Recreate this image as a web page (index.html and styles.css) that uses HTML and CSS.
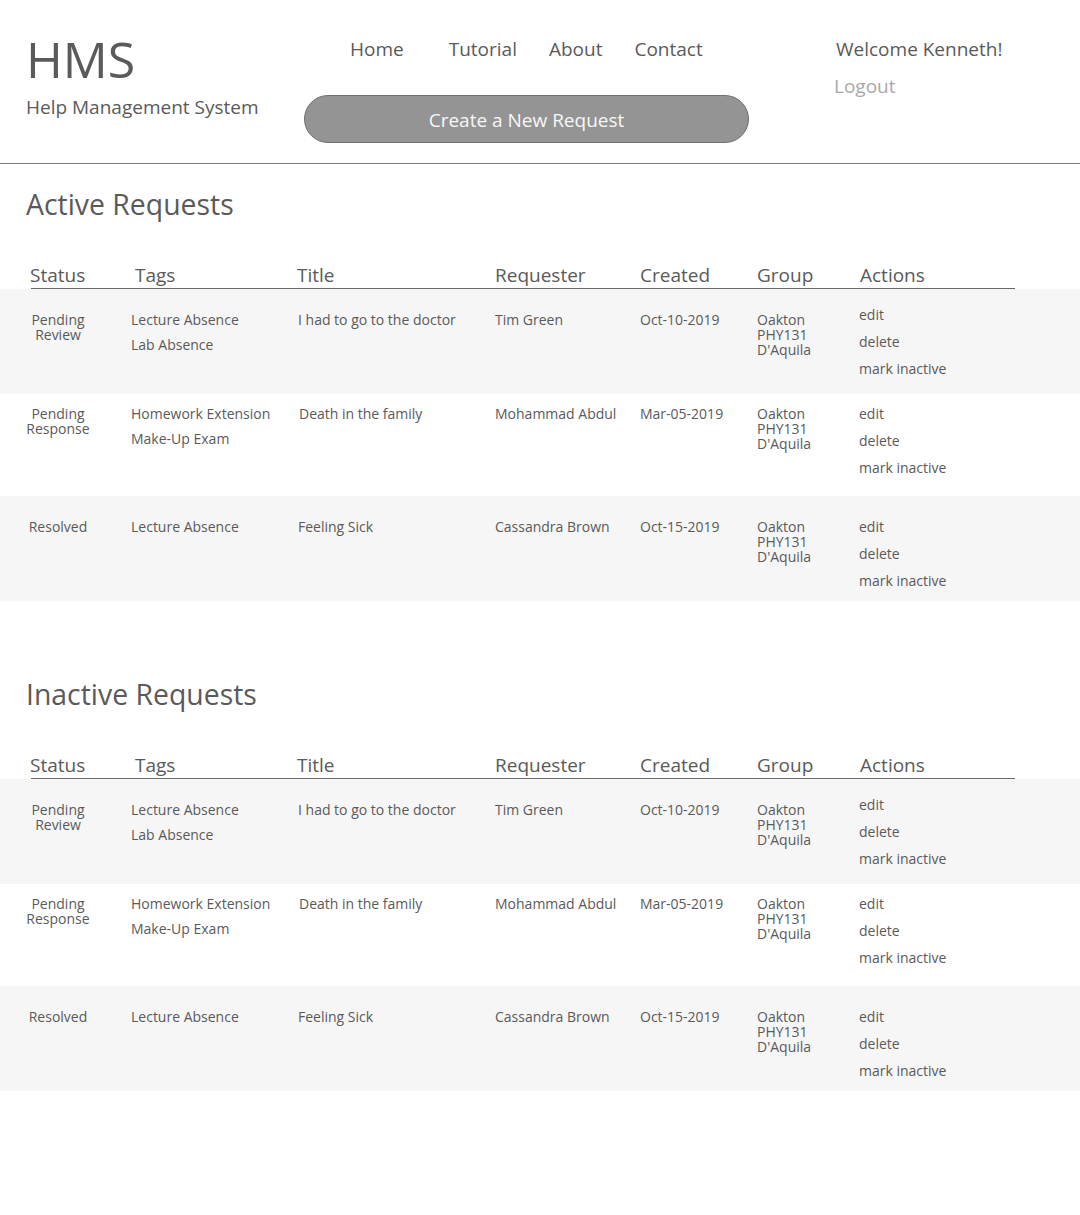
FILE: index.html
```html
<!DOCTYPE html>
<html lang="en">
<head>
<meta charset="utf-8">
<title>HMS - Help Management System</title>
<link rel="stylesheet" href="styles.css">
</head>
<body>
<header class="topbar">
  <div class="brand">
    <div class="logo">HMS</div>
    <div class="tagline">Help Management System</div>
  </div>
  <div class="center">
    <nav class="links">
      <a class="link link-home" href="#">Home</a>
      <a class="link" href="#">Tutorial</a>
      <a class="link" href="#">About</a>
      <a class="link" href="#">Contact</a>
    </nav>
    <button class="cta" type="button">Create a New Request</button>
  </div>
  <div class="user">
    <div class="welcome">Welcome Kenneth!</div>
    <a class="logout" href="#">Logout</a>
  </div>
</header>

<main>
  <section class="requests">
    <h2 class="section-title">Active Requests</h2>
    <div class="thead">
      <span>Status</span><span>Tags</span><span>Title</span><span>Requester</span><span>Created</span><span>Group</span><span>Actions</span>
    </div>
    <div class="row shaded first">
      <div class="status">Pending<br>Review</div>
      <div class="tags"><span>Lecture Absence</span><span>Lab Absence</span></div>
      <div class="cell">I had to go to the doctor</div>
      <div class="cell">Tim Green</div>
      <div class="cell">Oct-10-2019</div>
      <div class="group">Oakton<br>PHY131<br>D'Aquila</div>
      <div class="actions lifted"><a href="#">edit</a><a href="#">delete</a><a href="#">mark inactive</a></div>
    </div>
    <div class="row plain">
      <div class="status">Pending<br>Response</div>
      <div class="tags"><span>Homework Extension</span><span>Make-Up Exam</span></div>
      <div class="cell nudge">Death in the family</div>
      <div class="cell">Mohammad Abdul</div>
      <div class="cell">Mar-05-2019</div>
      <div class="group">Oakton<br>PHY131<br>D'Aquila</div>
      <div class="actions"><a href="#">edit</a><a href="#">delete</a><a href="#">mark inactive</a></div>
    </div>
    <div class="row shaded last">
      <div class="status">Resolved</div>
      <div class="tags"><span>Lecture Absence</span></div>
      <div class="cell">Feeling Sick</div>
      <div class="cell">Cassandra Brown</div>
      <div class="cell">Oct-15-2019</div>
      <div class="group">Oakton<br>PHY131<br>D'Aquila</div>
      <div class="actions"><a href="#">edit</a><a href="#">delete</a><a href="#">mark inactive</a></div>
    </div>
  </section>

  <section class="requests">
    <h2 class="section-title">Inactive Requests</h2>
    <div class="thead">
      <span>Status</span><span>Tags</span><span>Title</span><span>Requester</span><span>Created</span><span>Group</span><span>Actions</span>
    </div>
    <div class="row shaded first">
      <div class="status">Pending<br>Review</div>
      <div class="tags"><span>Lecture Absence</span><span>Lab Absence</span></div>
      <div class="cell">I had to go to the doctor</div>
      <div class="cell">Tim Green</div>
      <div class="cell">Oct-10-2019</div>
      <div class="group">Oakton<br>PHY131<br>D'Aquila</div>
      <div class="actions lifted"><a href="#">edit</a><a href="#">delete</a><a href="#">mark inactive</a></div>
    </div>
    <div class="row plain">
      <div class="status">Pending<br>Response</div>
      <div class="tags"><span>Homework Extension</span><span>Make-Up Exam</span></div>
      <div class="cell nudge">Death in the family</div>
      <div class="cell">Mohammad Abdul</div>
      <div class="cell">Mar-05-2019</div>
      <div class="group">Oakton<br>PHY131<br>D'Aquila</div>
      <div class="actions"><a href="#">edit</a><a href="#">delete</a><a href="#">mark inactive</a></div>
    </div>
    <div class="row shaded last">
      <div class="status">Resolved</div>
      <div class="tags"><span>Lecture Absence</span></div>
      <div class="cell">Feeling Sick</div>
      <div class="cell">Cassandra Brown</div>
      <div class="cell">Oct-15-2019</div>
      <div class="group">Oakton<br>PHY131<br>D'Aquila</div>
      <div class="actions"><a href="#">edit</a><a href="#">delete</a><a href="#">mark inactive</a></div>
    </div>
  </section>
</main>
</body>
</html>
```

FILE: styles.css
```css
* { box-sizing: border-box; }

body {
  margin: 0;
  background: #ffffff;
  color: #5a5a5a;
  font-family: "Open Sans", "Noto Sans", sans-serif;
}

a { color: inherit; text-decoration: none; }

/* ---------- header ---------- */
.topbar {
  display: flex;
  height: 164px;
  border-bottom: 1px solid #7a7a7a;
}

.brand {
  width: 304px;
  padding: 29px 0 0 26px;
}

.logo {
  font-size: 50px;
  line-height: 60px;
}

.tagline {
  margin-top: 4px;
  font-size: 19px;
  line-height: 28px;
}

.center {
  width: 445px;
  padding-top: 35px;
  display: flex;
  flex-direction: column;
}

.links {
  display: flex;
  gap: 32px;
  padding-left: 46px;
  height: 28px;
}

.link {
  font-size: 19px;
  line-height: 28px;
}

.link-home { margin-right: 13px; }

.cta {
  margin-top: 32px;
  height: 48px;
  width: 445px;
  border: 1px solid #707070;
  border-radius: 24px;
  background: #949494;
  color: #f7f7f7;
  font-family: inherit;
  font-size: 19px;
  padding: 2px 0 0;
  cursor: pointer;
}

.user {
  margin-left: 85px;
  padding-top: 35px;
  display: flex;
  flex-direction: column;
  align-items: flex-start;
}

.welcome {
  padding-left: 2px;
  font-size: 19px;
  line-height: 28px;
}

.logout {
  margin-top: 9px;
  font-size: 19px;
  line-height: 28px;
  color: #a9a9a9;
}

/* ---------- sections ---------- */
.requests {
  padding-top: 20px;
}

.requests + .requests {
  margin-top: 53px;
}

.section-title {
  margin: 0 0 38px 26px;
  font-weight: 400;
  font-size: 28.4px;
  line-height: 40px;
}

.thead {
  display: grid;
  grid-template-columns: 104px 162px 198px 145px 117px 103px 1fr;
  margin-left: 31px;
  width: 984px;
  height: 27px;
  border-bottom: 1px solid #6a6a6a;
  font-size: 19px;
  line-height: 26px;
}

.thead span:first-child { margin-left: -1px; }

.row {
  display: grid;
  grid-template-columns: 131px 167px 197px 145px 117px 102px 1fr;
  font-size: 14px;
  line-height: 20px;
}

.row.shaded { background: #f6f6f6; }
.row.first { height: 105px; padding-top: 21px; }
.row.plain { height: 102px; padding-top: 10px; }
.row.last { height: 105px; padding-top: 21px; }

.status {
  width: 116px;
  text-align: center;
  line-height: 15px;
  padding-top: 2px;
}

.tags {
  display: flex;
  flex-direction: column;
  gap: 5px;
}

.nudge { padding-left: 1px; }

.group {
  line-height: 15px;
  padding-top: 2px;
}

.actions {
  display: flex;
  flex-direction: column;
  align-items: flex-start;
  gap: 7px;
}

.actions.lifted { margin-top: -5px; }
```
